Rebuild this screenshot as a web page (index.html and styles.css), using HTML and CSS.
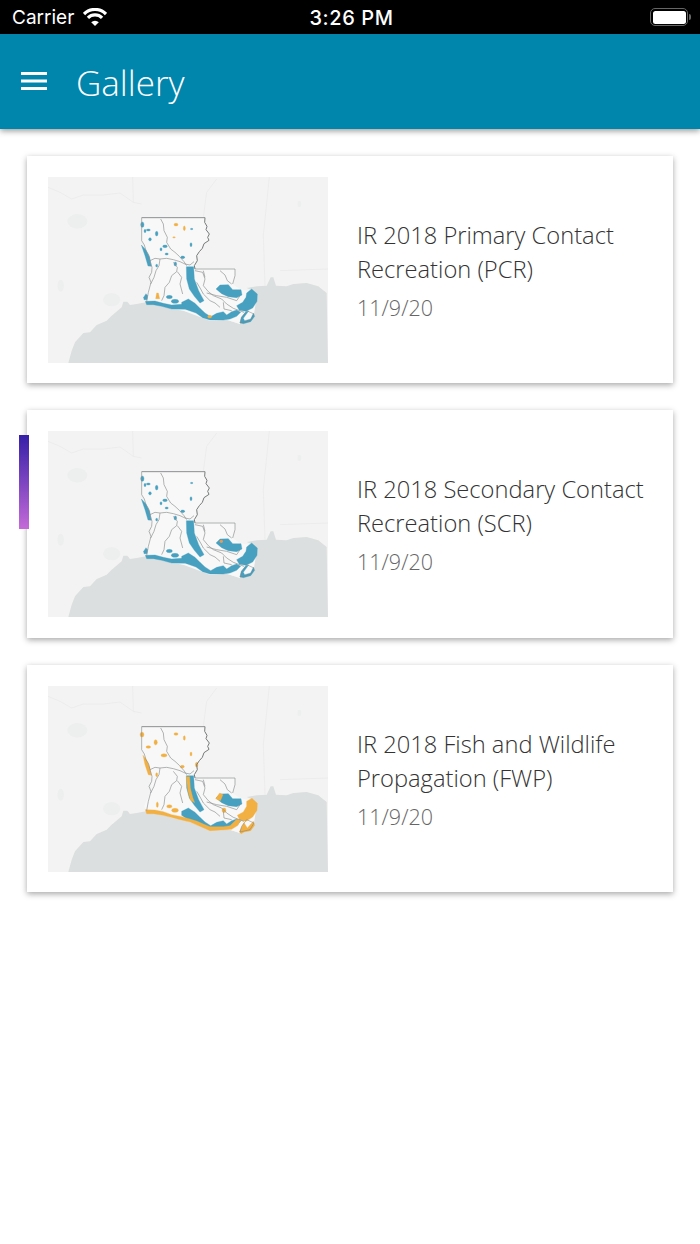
FILE: index.html
```html
<!DOCTYPE html>
<html lang="en">
<head>
<meta charset="utf-8">
<title>Gallery</title>
<link rel="stylesheet" href="styles.css">
</head>
<body>
<svg class="defs" width="0" height="0" aria-hidden="true">
  <defs>
    <filter id="soft" x="0" y="0" width="100%" height="100%"><feGaussianBlur stdDeviation="1"/></filter>
    <g id="basemap">
      <rect x="24" y="24" width="840" height="558" fill="#f3f3f3"/>
      <g fill="none" stroke="#e9e9e9" stroke-width="2">
        <path d="M24 55 L60 70 L95 90 L130 78 L190 78 L240 72 L280 100 L305 105"/>
        <path d="M278 24 L280 100"/>
        <path d="M530 30 L500 70 L490 145"/>
        <path d="M688 24 L670 200 L675 350"/>
        <path d="M720 305 L864 300"/>
      </g>
      <g fill="#edefee">
        <ellipse cx="112" cy="157" rx="30" ry="22"/>
        <ellipse cx="215" cy="392" rx="26" ry="20"/>
        <ellipse cx="62" cy="350" rx="10" ry="18"/>
        <ellipse cx="778" cy="105" rx="6" ry="10"/>
      </g>
      <path fill="#dcdfdf" d="M85 582 L95 545 L105 520 L130 492 L150 490 L170 468 L200 455 L215 440 L245 415 L250 398 L262 398 L270 408 L290 405 L318 400 L340 405 L370 408 L395 420 L430 425 L470 432 L490 445 L510 455 L560 452 L600 465 L630 455 L642 435 L625 425 L650 385 L640 365 L620 357 L650 352 L680 350 L692 325 L700 325 L708 350 L740 352 L760 345 L800 342 L835 352 L860 372 L864 582 Z"/>
      <path fill="#f8f8f8" d="M305 146 L495 146 L497 170 L508 195 L505 215 L490 225 L480 250 L470 260 L465 300 L585 300 L585 320 L578 345 L600 360 L625 365 L650 385 L642 435 L630 455 L600 465 L560 452 L510 455 L430 425 L370 408 L320 400 L312 385 L333 340 L335 310 L330 275 L318 245 L305 215 Z"/>
    </g>
    <g id="borders">
      <g fill="none" stroke="#8c8e8f" stroke-width="2" stroke-linejoin="round">
        <path stroke-width="3" d="M305 146 L495 146"/>
        <path stroke="#77797a" stroke-width="3" d="M495 146 L494 160 L501 172 L498 182 L508 195 L503 205 L507 214 L492 224 L487 238 L478 248 L470 260 L472 275 L463 290 L465 300"/>
        <path d="M465 300 L585 300 L585 320 L578 345"/>
        <path d="M305 146 L305 215 L313 228 L318 245 L326 258 L330 275 L336 295 L335 310 L327 325 L333 340 L325 370 L320 398"/>
        <path d="M362 150 L370 165 L372 185 L382 205 L380 220 L392 240 L405 250 L418 262 L432 278 L440 290"/>
        <path d="M330 275 L345 268 L360 270 L380 268 L400 272 L420 278 L435 285 L450 288 L462 278"/>
        <path d="M360 270 L357 290 L348 305 L342 325 L332 345"/>
        <path d="M400 280 L412 295 L410 308 L395 320 L388 340 L375 355 L372 380 L365 395"/>
        <path d="M412 308 L425 325 L420 345 L428 375"/>
        <path d="M465 305 L488 310 L495 330 L490 350 L505 368 L520 380 L545 390 L560 405 L580 418 L612 430"/>
        <path d="M470 340 L482 360 L490 375 L510 395 L525 402 L540 415"/>
        <path d="M490 305 L495 325"/>
        <path d="M540 305 L555 318 L562 335 L575 345"/>
        <path d="M500 372 L530 380 L560 385 L590 395 L600 380"/>
        <path d="M550 400 L552 420 L575 425"/>
      </g>
      <path fill="none" stroke="#7f8182" stroke-width="1.500" d="M600 462 L605 445 L620 425 L642 435 L630 455 Z"/>
    </g>
    <g id="wet-common">
      <path d="M528 360 L540 348 L565 347 L578 362 L603 362 L606 378 L590 386 L565 383 L545 374 Z"/>
      <path d="M425 400 L445 390 L465 403 L480 418 L495 432 L512 443 L530 433 L550 428 L560 438 L575 428 L590 423 L602 430 L590 442 L570 450 L550 453 L510 453 L488 446 L468 432 L440 422 L425 412 Z"/>
      <path d="M439 293 L461 293 L463 330 L476 365 L492 395 L480 402 L463 382 L448 360 L440 330 Z"/>
    </g>
    <g id="wet-blue">
      <path d="M304 228 L318 243 L329 265 L334 292 L324 291 L315 260 Z"/>
      <path d="M620 372 L635 360 L652 375 L651 397 L638 417 L618 427 L598 424 L590 410 L608 400 L618 385 Z"/>
      <path d="M316 397 L345 396 L370 403 L395 408 L425 406 L440 421 L395 420 L365 412 L340 407 L320 407 Z"/>
      <path d="M600 462 L604 445 L618 428 L626 426 L610 448 L614 455 L632 450 L640 433 L644 442 L632 458 L610 464 Z"/>
      <path d="M311 385 L318 374 L323 380 L321 392 L312 392 Z"/>
      <ellipse cx="388" cy="384" rx="9" ry="5"/>
      <ellipse cx="405" cy="397" rx="11" ry="6"/>
      <ellipse cx="307" cy="167" rx="5" ry="8"/>
      <ellipse cx="325" cy="183" rx="6" ry="3"/>
      <ellipse cx="350" cy="194" rx="4" ry="7"/>
      <ellipse cx="315" cy="186" rx="3" ry="5"/>
      <ellipse cx="330" cy="211" rx="4" ry="5"/>
      <ellipse cx="363" cy="241" rx="3" ry="5"/>
      <ellipse cx="375" cy="232" rx="7" ry="4"/>
      <ellipse cx="428" cy="265" rx="6" ry="4"/>
      <ellipse cx="453" cy="227" rx="3" ry="6"/>
      <ellipse cx="406" cy="285" rx="4" ry="6"/>
      <ellipse cx="350" cy="290" rx="3" ry="4"/>
      <ellipse cx="455" cy="180" rx="4" ry="2"/>
      <ellipse cx="380" cy="255" rx="5" ry="3"/>
    </g>
    <g id="wet-orange">
      <path d="M309 232 L320 246 L329 268 L334 292 L325 290 L315 260 Z"/>
      <path d="M439 296 L449 296 L451 330 L458 358 L464 374 L451 366 L443 335 Z"/>
      <path d="M620 370 L636 361 L652 376 L651 397 L638 417 L618 430 L600 427 L592 412 L610 402 L620 385 Z"/>
      <path d="M316 395 L345 396 L370 401 L395 410 L425 416 L450 423 L472 430 L490 438 L510 446 L550 446 L570 443 L590 424 L602 426 L594 442 L575 454 L510 458 L485 447 L450 432 L410 422 L370 412 L340 407 L320 407 Z"/>
      <path d="M598 462 L606 445 L612 434 L622 450 L640 430 L644 442 L632 458 L612 462 L604 467 Z"/>
      <path d="M527 362 L539 345 L549 350 L541 368 Z"/>
      <ellipse cx="306" cy="170" rx="6" ry="7"/>
      <ellipse cx="408" cy="168" rx="6" ry="4"/>
      <ellipse cx="433" cy="180" rx="3" ry="7"/>
      <ellipse cx="347" cy="193" rx="5" ry="8"/>
      <ellipse cx="325" cy="207" rx="7" ry="4"/>
      <ellipse cx="372" cy="232" rx="9" ry="5"/>
      <ellipse cx="427" cy="266" rx="6" ry="4"/>
      <ellipse cx="453" cy="228" rx="3" ry="6"/>
      <ellipse cx="352" cy="380" rx="3" ry="8"/>
      <ellipse cx="388" cy="385" rx="8" ry="5"/>
      <ellipse cx="405" cy="397" rx="10" ry="6"/>
      <ellipse cx="552" cy="397" rx="6" ry="7"/>
      <ellipse cx="470" cy="260" rx="4" ry="7"/>
      <ellipse cx="350" cy="290" rx="3" ry="6"/>
    </g>
  </defs>
</svg>

<header class="status-bar">
  <div class="status-left">
    <span>Carrier</span>
    <svg class="wifi" viewBox="0 0 24 18" width="24" height="18"><g fill="none" stroke="#fff" stroke-width="3.200"><path d="M1 6 A15.500 15.500 0 0 1 23 6"/><path d="M4.900 9.900 A10 10 0 0 1 19.100 9.900"/></g><path fill="#fff" d="M12 18 L8.200 14.200 A5.400 5.400 0 0 1 15.800 14.200 Z"/></svg>
  </div>
  <span class="status-time">3:26 PM</span>
  <div class="battery"><span class="battery-level"></span></div>
</header>

<nav class="app-bar">
  <svg class="menu-icon" viewBox="0 0 26 18" width="26" height="18"><path fill="#fff" d="M0 0H26V3H0ZM0 7.500H26V10.500H0ZM0 15H26V18H0Z"/></svg>
  <h1 class="app-title">Gallery</h1>
</nav>

<main class="gallery">
  <span class="scroll-mark"></span>

  <article class="card">
    <svg class="thumb" viewBox="24 24 840 558">
      <g filter="url(#soft)">
        <use href="#basemap"/>
        <use href="#wet-common" class="blue"/>
        <use href="#wet-blue" class="blue"/>
        <use href="#borders"/>
        <g class="orange">
          <path d="M347 389 L350 372 L355 372 L359 389 Z"/>
          <ellipse cx="408" cy="167" rx="6" ry="4"/>
          <ellipse cx="433" cy="178" rx="3" ry="7"/>
          <ellipse cx="402" cy="205" rx="4" ry="2"/>
          <ellipse cx="509" cy="443" rx="6" ry="4"/>
        </g>
      </g>
    </svg>
    <div class="card-text">
      <h2 class="card-title">IR 2018 Primary Contact Recreation (PCR)</h2>
      <p class="card-date">11/9/20</p>
    </div>
  </article>

  <article class="card">
    <svg class="thumb" viewBox="24 24 840 558">
      <g filter="url(#soft)">
        <use href="#basemap"/>
        <use href="#wet-common" class="blue"/>
        <use href="#wet-blue" class="blue"/>
        <use href="#borders"/>
        <circle class="coral" cx="544" cy="355" r="5"/>
      </g>
    </svg>
    <div class="card-text">
      <h2 class="card-title">IR 2018 Secondary Contact Recreation (SCR)</h2>
      <p class="card-date">11/9/20</p>
    </div>
  </article>

  <article class="card">
    <svg class="thumb" viewBox="24 24 840 558">
      <g filter="url(#soft)">
        <use href="#basemap"/>
        <use href="#wet-common" class="blue"/>
        <use href="#wet-orange" class="orange"/>
        <use href="#borders"/>
      </g>
    </svg>
    <div class="card-text">
      <h2 class="card-title">IR 2018 Fish and Wildlife Propagation (FWP)</h2>
      <p class="card-date">11/9/20</p>
    </div>
  </article>
</main>
</body>
</html>
```
FILE: styles.css
```css
* { box-sizing: border-box; }
html, body { margin: 0; padding: 0; background: #fff; }
body { width: 700px; height: 1244px; overflow: hidden; font-family: "Open Sans", sans-serif; }
.defs { display: block; height: 0; }

.status-bar {
  height: 34px;
  background: #000;
  color: #fff;
  display: grid;
  grid-template-columns: 1fr auto 1fr;
  align-items: center;
  padding: 1px 9px 0 12px;
  font-family: Inter, sans-serif;
  font-size: 19px;
}
.status-left { display: flex; align-items: center; gap: 9px; }
.wifi { display: block; margin-top: -2px; }
.status-time { font-size: 20px; font-weight: 500; letter-spacing: 0.600px; }
.battery {
  justify-self: end;
  width: 38px;
  height: 18px;
  margin: -1px 3px 0 0;
  border: 1.500px solid #666;
  border-radius: 5px;
  padding: 1.500px;
  position: relative;
}
.battery::after {
  content: "";
  position: absolute;
  right: -4px;
  top: 4.500px;
  width: 2px;
  height: 6px;
  border-radius: 0 2px 2px 0;
  background: #666;
}
.battery-level { display: block; height: 100%; background: #fff; border-radius: 2.500px; }

.app-bar {
  height: 95px;
  background: #0085ad;
  display: flex;
  align-items: center;
  gap: 30px;
  padding: 0 0 0 21px;
  box-shadow: 0 2px 6px rgba(0, 0, 0, 0.4);
  position: relative;
  z-index: 2;
}
.menu-icon { display: block; margin-top: -2px; }
.app-title { margin: 2px 0 0 -1px; color: #fff; font-size: 35px; font-weight: 300; line-height: 46px; }

.gallery {
  position: relative;
  display: flex;
  flex-direction: column;
  gap: 27px;
  padding: 26.500px 27px 0;
}
.scroll-mark {
  position: absolute;
  left: 19px;
  top: 306px;
  width: 10px;
  height: 94px;
  background: linear-gradient(#3520a8, #c46ad8);
  z-index: 1;
}
.card {
  height: 227.500px;
  display: flex;
  align-items: center;
  gap: 29px;
  padding: 0 20px 0 21px;
  background: #fff;
  box-shadow: 0 2px 6px rgba(0, 0, 0, 0.35);
}
.thumb { display: block; flex: none; width: 280px; height: 186px; margin-top: 1px; }
.blue { fill: #46a0bf; stroke: #46a0bf; stroke-width: 1; }
.orange { fill: #f2b042; stroke: #f2b042; stroke-width: 1; }
.coral { fill: #e89a5a; }
.card-text { min-width: 0; margin-top: 4px; }
.card-title { margin: 0; font-size: 23.700px; font-weight: 300; line-height: 34px; color: #333; }
.card-date { margin: 5px 0 0; font-size: 21.500px; font-weight: 300; line-height: 34px; color: #666; }
```
